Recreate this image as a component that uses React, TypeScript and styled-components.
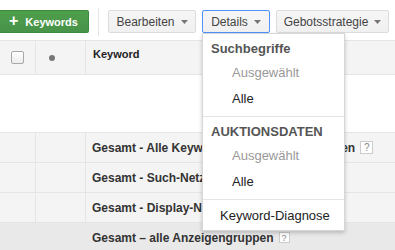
import React from 'react';
import styled, { createGlobalStyle } from 'styled-components';

const GlobalStyle = createGlobalStyle`
    html, body {
        margin: 0;
        padding: 0;
        background: #ffffff;
        font-family: Arial, "Liberation Sans", sans-serif;
        font-size: 13px;
        color: #222222;
        overflow: hidden;
    }
`;

interface Row {
    label: string;
    help?: boolean;
    total?: boolean;
}

const rows: Row[] = [
    { label: 'Gesamt - Alle Keywords der Anzeigengruppen', help: true },
    { label: 'Gesamt - Such-Netzwerk' },
    { label: 'Gesamt - Display-Netzwerk' },
    { label: 'Gesamt – alle Anzeigengruppen', help: true, total: true },
];

function Caret() {
    return (
        <CaretSvg width="7" height="4" viewBox="0 0 7 4">
            <path d="M0 0 L7 0 L3.5 4 Z" fill="#777777" />
        </CaretSvg>
    );
}

function App() {
    return (
        <Page>
            <GlobalStyle />
            <Toolbar>
                <AddButton>
                    <Plus>+</Plus>
                    <span>Keywords</span>
                </AddButton>
                <Divider />
                <MenuButton $width={88}>Bearbeiten <Caret /></MenuButton>
                <MenuButton $width={68} $active>Details <Caret /></MenuButton>
                <MenuButton $width={113}>Gebotsstrategie <Caret /></MenuButton>
            </Toolbar>

            <Table>
                <HeaderRow>
                    <CheckCell><CheckBox /></CheckCell>
                    <DotCell><Dot /></DotCell>
                    <HeadLabel>Keyword</HeadLabel>
                </HeaderRow>
                <Blank />
                {rows.map((row) => (
                    <DataRow key={row.label} $total={row.total}>
                        <CheckCell $plain={row.total} />
                        <DotCell $plain={row.total} />
                        <RowLabel>
                            {row.label}
                            {row.help && <Help $small={row.total}>?</Help>}
                        </RowLabel>
                    </DataRow>
                ))}
            </Table>

            <Menu>
                <MenuHeading>Suchbegriffe</MenuHeading>
                <MenuItem $muted>Ausgewählt</MenuItem>
                <MenuItem>Alle</MenuItem>
                <MenuSep />
                <MenuHeading>AUKTIONSDATEN</MenuHeading>
                <MenuItem $muted>Ausgewählt</MenuItem>
                <MenuItem>Alle</MenuItem>
                <MenuSep />
                <MenuLink>Keyword-Diagnose</MenuLink>
            </Menu>
        </Page>
    );
}

const Page = styled.div`
    position: relative;
    width: 395px;
    height: 250px;
    overflow: hidden;
`;

// toolbar
const Toolbar = styled.div`
    display: flex;
    align-items: center;
    height: 40px;
    padding-top: 3px;
    box-sizing: border-box;
`;
const AddButton = styled.div`
    display: flex;
    align-items: center;
    gap: 7px;
    width: 89px;
    height: 23px;
    padding-left: 9px;
    box-sizing: border-box;
    background: linear-gradient(#4f9e4b, #47944a);
    border: 1px solid #3b8a3d;
    border-left: none;
    border-radius: 0 2px 2px 0;
    color: #ffffff;
    font-weight: bold;
    font-size: 11px;
`;
const Plus = styled.span`
    font-size: 16px;
    line-height: 1;
    margin-top: -2px;
`;
const Divider = styled.div`
    width: 1px;
    height: 28px;
    background: #e5e5e5;
    margin: 0 9px 0 9px;
`;
const MenuButton = styled.div<{ $width: number; $active?: boolean }>`
    display: flex;
    align-items: center;
    justify-content: center;
    gap: 6px;
    width: ${(p) => p.$width}px;
    height: 23px;
    margin-right: 6px;
    box-sizing: border-box;
    background: linear-gradient(#f6f6f6, #f0f0f0);
    border: 1px solid ${(p) => (p.$active ? '#4d90fe' : '#dcdcdc')};
    border-radius: 2px;
    color: #444444;
    font-size: 12px;
`;
const CaretSvg = styled.svg`
    margin-top: 1px;
`;

// table
const Table = styled.div`
    display: flex;
    flex-direction: column;
`;
const HeaderRow = styled.div`
    display: flex;
    height: 35px;
    box-sizing: border-box;
    background: #f4f4f4;
    border-top: 1px solid #e5e5e5;
    border-bottom: 1px solid #e5e5e5;
`;
const CheckCell = styled.div<{ $plain?: boolean }>`
    width: 36px;
    flex: none;
    display: flex;
    align-items: center;
    justify-content: center;
    box-sizing: border-box;
    border-right: 1px solid ${(p) => (p.$plain ? 'transparent' : '#e5e5e5')};
`;
const DotCell = styled.div<{ $plain?: boolean }>`
    width: 50px;
    flex: none;
    display: flex;
    align-items: center;
    padding-left: 13px;
    box-sizing: border-box;
    border-right: 1px solid ${(p) => (p.$plain ? 'transparent' : '#e5e5e5')};
`;
const CheckBox = styled.div`
    width: 11px;
    height: 11px;
    border: 1px solid #a8a8a8;
    border-radius: 2px;
    background: linear-gradient(#ffffff, #ececec);
`;
const Dot = styled.div`
    width: 6px;
    height: 6px;
    border-radius: 50%;
    background: #777777;
    margin-top: 1px;
`;
const HeadLabel = styled.div`
    padding: 7px 0 0 7px;
    font-weight: bold;
    font-size: 11px;
    color: #222222;
`;
const Blank = styled.div`
    height: 57px;
`;
const DataRow = styled.div<{ $total?: boolean }>`
    display: flex;
    height: 30px;
    box-sizing: border-box;
    background: ${(p) => (p.$total ? '#e9e9e9' : '#f4f4f4')};
    border-top: 1px solid #e5e5e5;
`;
const RowLabel = styled.div`
    display: flex;
    align-items: center;
    padding-left: 6px;
    font-weight: bold;
    font-size: 12px;
    color: #333333;
    white-space: nowrap;
`;
const Help = styled.span<{ $small?: boolean }>`
    display: inline-flex;
    align-items: center;
    justify-content: center;
    width: ${(p) => (p.$small ? 9 : 11)}px;
    height: ${(p) => (p.$small ? 9 : 11)}px;
    margin-left: 5px;
    border: 1px solid #cccccc;
    background: #ffffff;
    color: #888888;
    font-size: ${(p) => (p.$small ? 9 : 10)}px;
    font-weight: normal;
`;

// dropdown
const Menu = styled.div`
    position: absolute;
    left: 202px;
    top: 33px;
    width: 143px;
    box-sizing: border-box;
    background: #ffffff;
    border: 1px solid #d6d6d6;
    box-shadow: 0 2px 4px rgba(0, 0, 0, 0.2);
    padding: 4px 0 2px;
    display: flex;
    flex-direction: column;
`;
const MenuHeading = styled.div`
    height: 22px;
    line-height: 22px;
    padding-left: 8px;
    font-weight: bold;
    font-size: 13px;
    color: #555555;
`;
const MenuItem = styled.div<{ $muted?: boolean }>`
    height: 26px;
    line-height: 26px;
    padding-left: 29px;
    font-size: 13px;
    color: ${(p) => (p.$muted ? '#999999' : '#222222')};
`;
const MenuSep = styled.div`
    height: 1px;
    background: #e5e5e5;
    margin: 4px 0;
`;
const MenuLink = styled.div`
    height: 24px;
    line-height: 24px;
    padding-left: 17px;
    font-size: 13px;
    color: #222222;
`;

export default App;
